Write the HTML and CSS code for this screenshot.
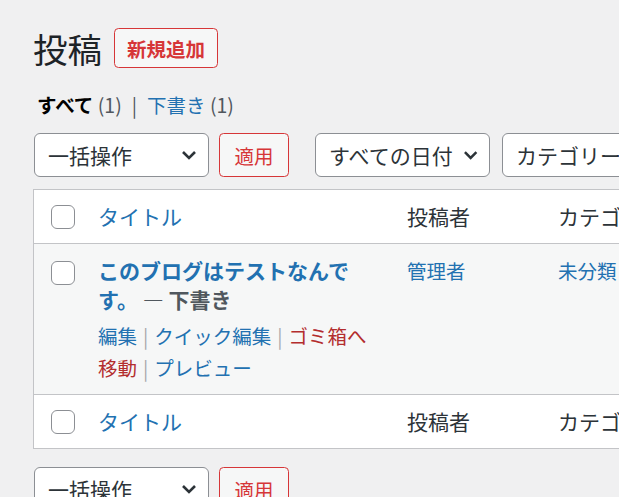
FILE: index.html
```html
<!DOCTYPE html>
<html lang="ja">
<head>
<meta charset="utf-8">
<title>投稿</title>
<link rel="stylesheet" href="styles.css">
</head>
<body>
<div class="wrap">
  <div class="head">
    <h1 class="page-title">投稿</h1>
    <a class="add-new" href="#">新規追加</a>
  </div>

  <div class="subsubsub">
    <a class="current" href="#">すべて</a> <span class="count">(1)</span><span class="sep">|</span><a href="#">下書き</a> <span class="count">(1)</span>
  </div>

  <div class="tablenav">
    <div class="select bulk"><span>一括操作</span><svg class="chev" viewBox="0 0 16 10" width="16" height="10"><path d="M2 2 L8 8 L14 2" fill="none" stroke="#2c3338" stroke-width="2.6"/></svg></div>
    <div class="btn apply">適用</div>
    <div class="select date"><span>すべての日付</span><svg class="chev" viewBox="0 0 16 10" width="16" height="10"><path d="M2 2 L8 8 L14 2" fill="none" stroke="#2c3338" stroke-width="2.6"/></svg></div>
    <div class="select cat"><span>カテゴリー一覧</span><svg class="chev" viewBox="0 0 16 10" width="16" height="10"><path d="M2 2 L8 8 L14 2" fill="none" stroke="#2c3338" stroke-width="2.6"/></svg></div>
  </div>

  <table class="list">
    <colgroup>
      <col class="c-check">
      <col class="c-title">
      <col class="c-author">
      <col class="c-cat">
      <col class="c-tags">
      <col class="c-comments">
      <col class="c-date">
    </colgroup>
    <thead>
      <tr>
        <th class="check"><span class="cb"></span></th>
        <th><a href="#">タイトル</a></th>
        <th>投稿者</th>
        <th>カテゴリー</th>
        <th>タグ</th>
        <th>💬</th>
        <th><a href="#">日付</a></th>
      </tr>
    </thead>
    <tbody>
      <tr>
        <td class="check"><span class="cb"></span></td>
        <td class="title-cell">
          <strong class="row-title-wrap"><a class="row-title" href="#">このブログはテストなんです。</a> <span class="post-state">— 下書き</span></strong>
          <div class="row-actions"><a href="#">編集</a><span class="sep">|</span><a href="#">クイック編集</a><span class="sep">|</span><a class="trash" href="#">ゴミ箱へ移動</a><span class="sep">|</span><a href="#">プレビュー</a></div>
        </td>
        <td><a href="#">管理者</a></td>
        <td><a href="#">未分類</a></td>
        <td>—</td>
        <td>—</td>
        <td>最終更新日</td>
      </tr>
    </tbody>
    <tfoot>
      <tr>
        <th class="check"><span class="cb"></span></th>
        <th><a href="#">タイトル</a></th>
        <th>投稿者</th>
        <th>カテゴリー</th>
        <th>タグ</th>
        <th>💬</th>
        <th><a href="#">日付</a></th>
      </tr>
    </tfoot>
  </table>

  <div class="tablenav bottom">
    <div class="select bulk"><span>一括操作</span><svg class="chev" viewBox="0 0 16 10" width="16" height="10"><path d="M2 2 L8 8 L14 2" fill="none" stroke="#2c3338" stroke-width="2.6"/></svg></div>
    <div class="btn apply">適用</div>
  </div>
</div>
</body>
</html>
```

FILE: styles.css
```css
* { box-sizing: border-box; }

html, body {
  margin: 0;
  padding: 0;
  background: #f0f0f1;
  overflow: hidden;
}

body {
  font-family: "Noto Sans CJK JP", "Noto Sans", sans-serif;
  color: #3c434a;
  font-size: 19.5px;
}

a { text-decoration: none; color: #2271b1; }

.wrap {
  padding: 28px 0 0 33px;
  width: 1150px;
}

.head {
  display: flex;
  align-items: center;
  height: 40px;
}

.page-title {
  margin: 0;
  font-size: 34.5px;
  font-weight: 400;
  line-height: 40px;
  color: #1d2327;
}

.add-new {
  margin-left: 12px;
  height: 40px;
  padding: 0 12px;
  border: 1px solid #d63638;
  border-radius: 4.5px;
  background: #f6f7f7;
  color: #d63638;
  font-weight: 700;
  font-size: 19.5px;
  display: flex;
  align-items: center;
}

.subsubsub {
  margin-top: 22px;
  padding-left: 4px;
  line-height: 29px;
  height: 29px;
  color: #50575e;
}

.subsubsub .current { color: #000; font-weight: 700; }
.subsubsub .count { color: #50575e; }
.subsubsub .sep { margin: 0 10px; color: #50575e; }

.tablenav {
  margin-top: 14px;
  margin-left: 1px;
  display: flex;
  height: 44px;
}

.tablenav.bottom { margin-top: 18px; }

.select {
  height: 44px;
  border: 1px solid #8c8f94;
  border-radius: 6px;
  background: #fff;
  padding: 0 11px 0 13px;
  display: flex;
  align-items: center;
  justify-content: space-between;
  font-size: 21px;
  color: #2c3338;
  white-space: nowrap;
  flex: none;
}

.select.bulk { width: 175px; }
.select.date { width: 175px; margin-left: 26px; }
.select.cat { width: 220px; margin-left: 12px; }
.select.date .chev { margin-left: 10px; }

.btn {
  height: 44px;
  border: 1px solid #d63638;
  border-radius: 4.5px;
  background: #f6f7f7;
  color: #d63638;
  display: flex;
  align-items: center;
  justify-content: center;
  font-size: 19.5px;
  flex: none;
}

.btn.apply { width: 70px; margin-left: 10px; }

.list {
  margin-top: 12px;
  border: 1px solid #c3c4c7;
  border-spacing: 0;
  table-layout: fixed;
  width: 1073px;
  background: #fff;
}

.c-check { width: 49px; }
.c-title { width: 309px; }
.c-author { width: 151px; }
.c-cat { width: 151px; }
.c-tags { width: 151px; }
.c-comments { width: 60px; }
.c-date { width: 200px; }

.list th {
  text-align: left;
  font-weight: 400;
  font-size: 21px;
  line-height: 29px;
  padding: 12px 15px;
  color: #2c3338;
  vertical-align: top;
  white-space: nowrap;
}

.list thead th { border-bottom: 1px solid #c3c4c7; }
.list tfoot th { border-top: 1px solid #c3c4c7; }

.list th.check { padding: 15px 0 0 17px; }

.list tbody tr { background: #f6f7f7; }

.list td {
  vertical-align: top;
  padding: 12px 15px 10px;
  line-height: 29px;
  font-size: 19.5px;
  color: #3c434a;
}

.list td.check { padding: 17px 0 0 17px; }

.list td.title-cell { padding-right: 22px; }

.cb {
  display: block;
  width: 24px;
  height: 24px;
  border: 1px solid #8c8f94;
  border-radius: 6px;
  background: #fff;
}

.row-title-wrap {
  display: block;
  font-size: 21px;
  font-weight: 700;
  line-height: 29px;
}

.row-title { color: #2271b1; }
.post-state { color: #50575e; }

.row-actions {
  padding-top: 6px;
  line-height: 32px;
  font-size: 19.5px;
  color: #a7aaad;
}

.row-actions .sep { margin: 0 6px; }
.row-actions .trash { color: #b32d2e; }
```
